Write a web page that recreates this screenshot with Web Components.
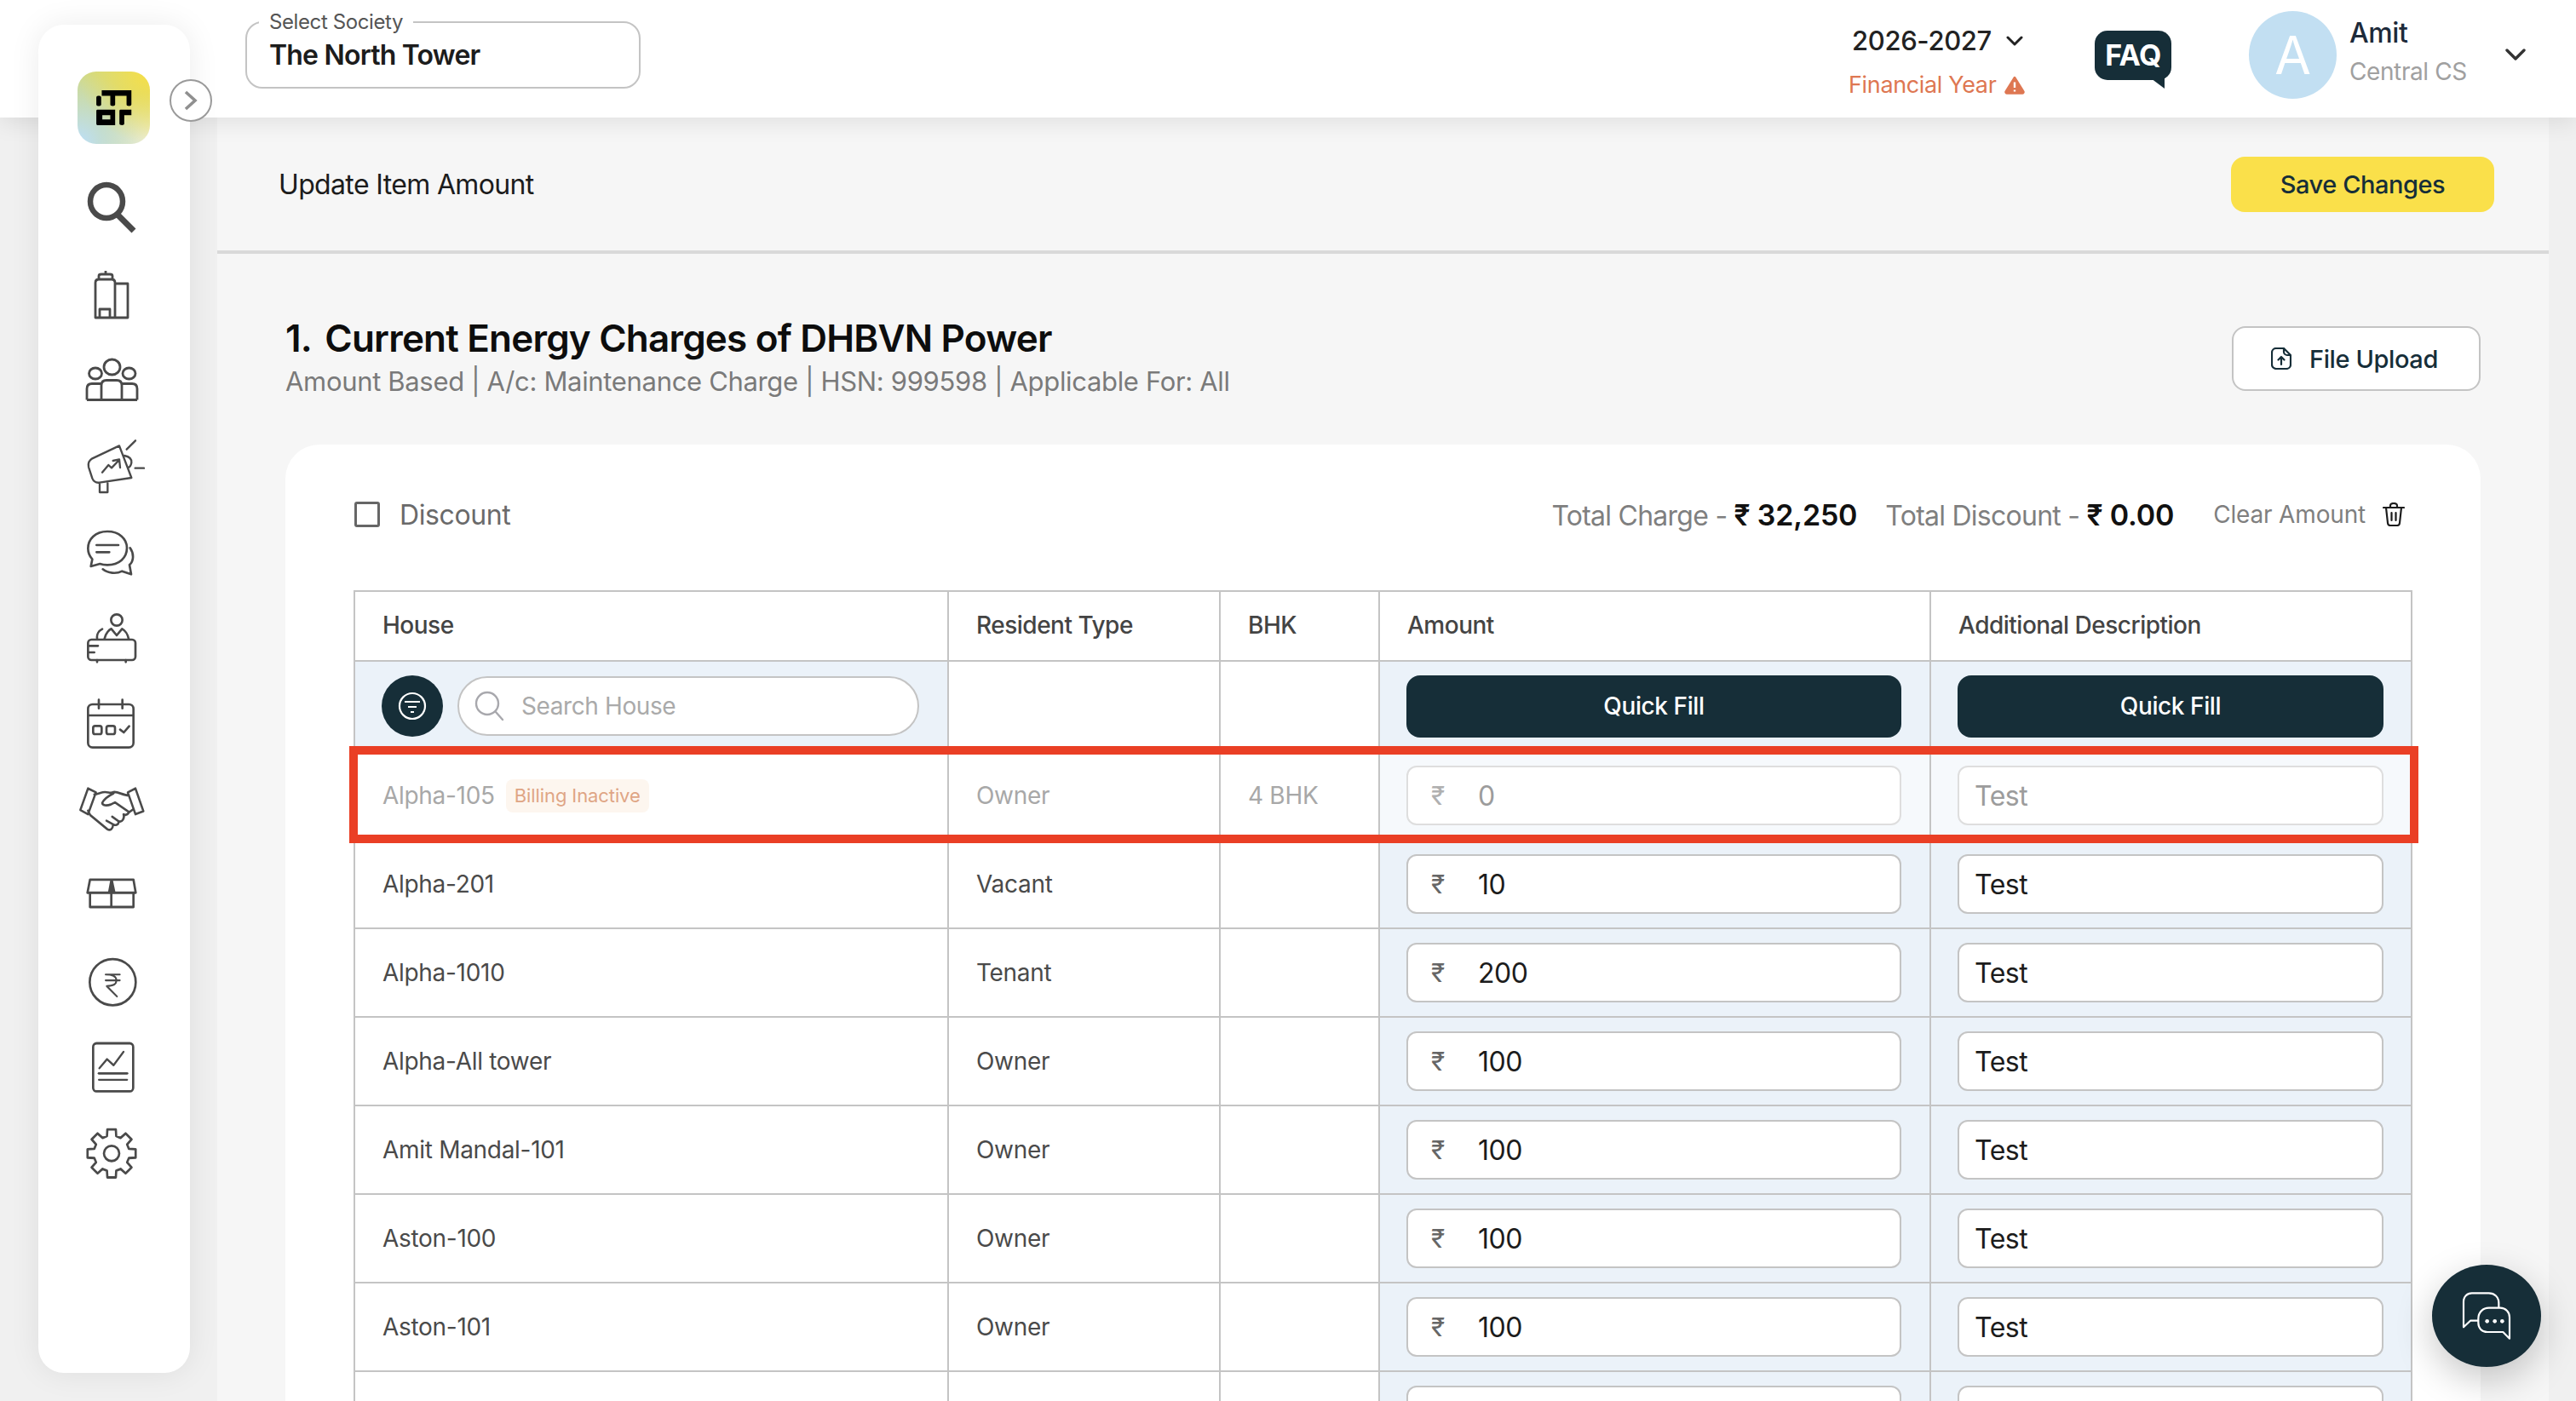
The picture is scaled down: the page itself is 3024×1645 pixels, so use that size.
<!DOCTYPE html>
<html><head><meta charset="utf-8"><title>Update Item Amount</title>
<style>
html,body{margin:0;height:1645px;overflow:hidden;background:#f0f0f0}
body{font-family:Inter,"Liberation Sans",sans-serif;letter-spacing:-.4px}
</style></head><body>
<app-shell>
  <top-bar slot="top"></top-bar>
  <side-nav slot="side"></side-nav>
  <page-main slot="main">
    <page-header title="Update Item Amount" action="Save Changes"></page-header>
    <section-head num="1." heading="Current Energy Charges of DHBVN Power" sub="Amount Based | A/c: Maintenance Charge | HSN: 999598 | Applicable For: All"></section-head>
    <charge-card>
      <charge-toolbar></charge-toolbar>
      <charge-table>
        <charge-row house="Alpha-105" type="Owner" bhk="4 BHK" amount="0" desc="Test" inactive></charge-row>
        <charge-row house="Alpha-201" type="Vacant" amount="10" desc="Test"></charge-row>
        <charge-row house="Alpha-1010" type="Tenant" amount="200" desc="Test"></charge-row>
        <charge-row house="Alpha-All tower" type="Owner" amount="100" desc="Test"></charge-row>
        <charge-row house="Amit Mandal-101" type="Owner" amount="100" desc="Test"></charge-row>
        <charge-row house="Aston-100" type="Owner" amount="100" desc="Test"></charge-row>
        <charge-row house="Aston-101" type="Owner" amount="100" desc="Test"></charge-row>
        <charge-row></charge-row>
      </charge-table>
    </charge-card>
  </page-main>
  <chat-fab slot="fab"></chat-fab>
</app-shell>
<script>
function def(name,render){
  customElements.define(name,class extends HTMLElement{
    connectedCallback(){
      if(this.shadowRoot)return;
      const r=this.attachShadow({mode:'open'});
      r.innerHTML=render(this);
    }
  });
}
const INK='#162e38';
def('app-shell',()=>`<style>
:host{display:grid;grid-template-columns:45px 178px 32px 1fr 32px;grid-template-rows:138px 1507px;height:1645px;overflow:hidden;position:relative}
::slotted([slot=top]){grid-column:1/-1;grid-row:1;z-index:1}
::slotted([slot=side]){grid-column:2;grid-row:1/3;z-index:2}
::slotted([slot=main]){grid-column:4;grid-row:2;z-index:0}
</style><slot name="top"></slot><slot name="side"></slot><slot name="main"></slot><slot name="fab"></slot>`);

def('top-bar',()=>`<style>
:host{display:flex;align-items:flex-start;background:#fff;box-shadow:0 6px 26px rgba(0,0,0,.09);padding-left:288px;height:138px;box-sizing:border-box;white-space:nowrap}
svg{flex:none}
.soc{position:relative;box-sizing:border-box;width:464px;height:79px;margin-top:25px;border:2px solid #c4c4c4;border-radius:20px;padding:18px 26px 0;font-size:32px;font-weight:600;color:#1c1c1c;line-height:40px;letter-spacing:-.8px}
.soc span{position:absolute;left:14px;top:-14px;background:#fff;padding:0 12px;font-size:24px;line-height:26px;font-weight:400;color:#555;letter-spacing:-.4px}
.r{margin-left:auto;display:flex;align-items:flex-start;padding-right:59px}
.yr{width:203px;margin-right:86px;padding-top:28px}
.yr b{display:flex;align-items:center;font-weight:500;font-size:31px;line-height:40px;color:#222;padding-left:4px;gap:17px;letter-spacing:-.35px}
.yr i{display:flex;align-items:center;gap:9px;font-style:normal;font-size:27px;line-height:36px;color:#de7752;margin-top:14px;letter-spacing:-.35px}
.faq{position:relative;box-sizing:border-box;width:90px;height:58px;margin:36px 91px 0 0;background:${INK};border-radius:15px;color:#fff;font-weight:700;font-size:34px;line-height:58px;text-align:center;letter-spacing:-.5px}
.faq svg{position:absolute;right:8px;top:56px}
.av{width:103px;height:103px;margin:13px 15px 0 0;border-radius:50%;background:#c2dff2;color:#fff;font-size:62px;line-height:103px;text-align:center;font-weight:400}
.who{width:183px;padding-top:19px}
.who div{font-size:32px;line-height:40px;color:#1d2a3a;font-weight:500}
.who span{display:block;font-size:28px;line-height:36px;color:#a0a0a0;margin-top:7px}
.ch{margin-top:56px}
</style>
<div class="soc"><span>Select Society</span>The North Tower</div>
<div class="r">
 <div class="yr"><b>2026-2027 <svg width="20" height="12" viewBox="0 0 20 12" fill="none" stroke="#222" stroke-width="3" stroke-linecap="round" stroke-linejoin="round"><path d="M2 2l8 8 8-8"/></svg></b>
 <i>Financial Year <svg width="24" height="22" viewBox="0 0 24 22"><path d="M12 2L22 18a1.5 1.5 0 0 1-1.5 2.5h-17A1.5 1.5 0 0 1 2 18z" fill="#de7752" stroke="#de7752" stroke-width="2.5" stroke-linejoin="round"/><path d="M12 7.5v6.5M12 16.5v2" stroke="#fff" stroke-width="2.4"/></svg></i></div>
 <div class="faq">FAQ<svg width="16" height="12" viewBox="0 0 16 12"><path d="M0 0h16v12z" fill="${INK}"/></svg></div>
 <div class="av">A</div>
 <div class="who"><div>Amit</div><span>Central CS</span></div>
 <svg class="ch" width="24" height="16" viewBox="0 0 24 16" fill="none" stroke="#333" stroke-width="3.4" stroke-linecap="round" stroke-linejoin="round"><path d="M2 3l10 10L22 3"/></svg>
</div>`);

function gearPath(cx,cy){
  const R=86,r=63,pts=[];
  for(let i=0;i<8;i++){
    const a=i*Math.PI/4;
    const p=(rad,d)=>{const t=a+d*Math.PI/180;return (cx+rad*Math.cos(t)).toFixed(1)+' '+(cy+(rad*Math.sin(t))*.933).toFixed(1)};
    pts.push(p(r,-15),p(R,-10),p(R,10),p(r,15));
  }
  return 'M'+pts.join('L')+'Z';
}
function cell(body,oy,h){
  h=h||300;
  return `<svg width="178" height="100" viewBox="15 ${oy} 534 ${h}" preserveAspectRatio="none" fill="none" stroke="#4a4a4a" stroke-width="8" stroke-linecap="round" stroke-linejoin="round">${body}</svg>`;
}
function pageCell(y,body){
  return `<svg width="178" height="100" viewBox="45 ${y} 178 100" fill="none" stroke="#4a4a4a" stroke-width="2.8" stroke-linejoin="round">${body}</svg>`;
}
def('side-nav',()=>{
 const icons=[
  pageCell(193,`<ellipse cx="125" cy="236.5" rx="19" ry="19.5" stroke-width="6.5"/><path d="M139 253l18 18" stroke-width="7"/>`),
  pageCell(293,`<path d="M112 373V332q0-4 4-4h15q4 0 4 4v41zM135 333h15v40h-15M117 373v-10h12v10M116 328v-4q0-2 3-2h10q3 0 3 2v4M124 322v-4"/>`),
  pageCell(393,`<ellipse cx="131.500" cy="431" rx="9.500" ry="9"/><ellipse cx="112" cy="438.500" rx="7.500" ry="6.500"/><ellipse cx="151.500" cy="438.500" rx="7.500" ry="6.500"/><path d="M102 469.500v-13q0-6 6-6h11M161 469.500v-13q0-6-6-6h-12M102 469.500h59M119 469.500v-17q0-6 6-6h12q6 0 6 6v17"/>`),
  cell(`<path d="M300 130L205 175Q188 185 192 205L205 245Q212 262 230 260L343 243ZM231 262V294H259V262M318 165Q345 170 343 190Q340 205 332 207M326 143L357 112M356 209H387M240 224L262 198L273 208L300 180M278 183L300 178L303 207" stroke-width="7"/>`,39),
  cell(`<path d="M258 432C215 432 190 460 190 492C190 510 198 522 205 530L200 555L232 546C240 549 250 550 258 550C300 550 327 525 327 490C327 458 300 432 258 432ZM220 480H297M220 505H265M338 490C352 510 352 535 336 550L342 583L310 572C290 582 260 580 242 565"/>`,339),
  cell(`<circle cx="291" cy="744" r="20"/><path d="M248 810C252 790 265 778 272 775L291 798L310 775C320 780 330 795 333 810M222 808C220 795 228 782 240 776M190 835H225M190 858H212M222 885V892M323 885V892"/><rect x="190" y="813" width="167" height="72" rx="12"/>`,639),
  cell(`<rect x="190" y="1041" width="160" height="152" rx="16"/><path d="M190 1080H350M228 1025V1055M311 1025V1055M303 1130L316 1140L335 1118"/><rect x="208" y="1117" width="30" height="29" rx="7"/><rect x="255" y="1117" width="30" height="29" rx="7"/>`,939),
  cell(`<path d="M190 72L218 85L190 157L163 143ZM330 85L357 72L385 147L357 157ZM212 92C225 90 240 84 250 84C262 84 270 90 280 84C295 82 315 95 332 95M280 88C265 95 245 108 240 120C240 128 255 130 270 125L285 118L335 150C328 160 320 160 315 157C320 170 310 185 298 180L275 165M298 182C298 192 285 195 278 190L255 178M278 192C278 205 268 212 258 206L198 160Q195 155 190 145M335 150L350 140" stroke-width="7.500"/>`,-19.6,280),
  cell(`<path d="M197 372H350L358 415H188ZM197 415V462H350V415M272 415V462"/><path d="M268 375H278L287 415H260Z" fill="#4a4a4a" stroke="none"/>`,260.4,280),
  cell(`<ellipse cx="277" cy="709" rx="81" ry="76"/><path d="M252 684H302M252 703H302M252 684C285 684 290 695 290 703C290 718 275 722 256 722L292 756" stroke-width="6"/>`,540.4,280),
  cell(`<rect x="208" y="910" width="141" height="158" rx="12"/><path d="M230 992L257 962L280 982L315 938" stroke-width="7"/><path d="M228 1009H328" /><path d="M228 1030H328" stroke-width="6"/>`,820.4,280),
  cell(`<path d="${gearPath(273,1272)}"/><ellipse cx="273" cy="1272" rx="27" ry="25"/>`,1100.4,280)
 ];
 return `<style>
:host{display:block;position:relative;margin-top:29px;height:1583px;width:178px;background:#fff;border-radius:30px;box-shadow:0 0 36px rgba(0,0,0,.08);box-sizing:border-box;padding-top:55px}
.logo{display:block;width:85px;height:85px;margin:0 0 24px 46px;border-radius:22px;background:radial-gradient(circle at 100% 0,#f7df45 0,rgba(247,223,69,0) 70%),radial-gradient(circle at 0 100%,#bcdffa 0,rgba(188,223,250,0) 70%),radial-gradient(circle at 100% 100%,#f2f0d8 0,rgba(242,240,216,0) 50%),#cfd98a}
.toggle{position:absolute;left:154px;top:64px;width:46px;height:46px;border:2.5px solid #9a9a9a;border-radius:50%;background:#fff;display:flex;align-items:center;justify-content:center;box-sizing:content-box}
nav{display:flex;flex-direction:column}
nav svg{display:block}
</style>
<div class="logo"><svg width="85" height="85" viewBox="18 12 254 254"><g fill="#000"><rect x="84" y="97" width="17" height="36" rx="6"/><path d="M103 78h104v50q0 5-8 5q-9 0-9-5V97h-40v31q0 5-8 5q-9 0-9-5V97h-30z"/><path fill-rule="evenodd" d="M88 146h62v54H88q-4 0-4-4v-46q0-4 4-4zM105 165v15h28v-15z"/><path d="M165 150q0-4 4-4h38v19h-25v31q0 4-8 4q-9 0-9-4z"/></g></svg></div>
<div class="toggle"><svg width="16" height="24" viewBox="0 0 16 24" fill="none" stroke="#8f8f8f" stroke-width="3.600"><path d="M2 2l11 10L2 22"/></svg></div>
<nav>${icons.join('')}</nav>`;
});

def('page-main',()=>`<style>:host{display:block;background:#f6f6f6;height:1507px;overflow:hidden}</style><slot></slot>`);

def('page-header',h=>`<style>
:host{display:flex;align-items:center;justify-content:space-between;box-sizing:border-box;height:160px;padding:0 64px 0 72px;border-bottom:4px solid #d9d9d9}
.t{font-size:32px;color:#1c1c1c;letter-spacing:-.65px}
.b{box-sizing:border-box;width:309px;height:65px;line-height:65px;text-align:center;background:#fae04a;border-radius:16px;color:${INK};font-weight:500;font-size:29px;letter-spacing:-.45px}
</style><div class="t">${h.getAttribute('title')}</div><div class="b">${h.getAttribute('action')}</div>`);

def('section-head',h=>`<style>
:host{display:flex;justify-content:space-between;align-items:flex-start;padding:71px 80px 0}
h1{margin:0;font-size:44px;line-height:56px;font-weight:600;color:#0d0d0d;letter-spacing:-.8px}
h1 span{margin-right:5px}
p{margin:3px 0 0;font-size:31px;line-height:40px;color:#7a7a7a;letter-spacing:-.33px}
.u{display:flex;align-items:center;gap:21px;box-sizing:border-box;width:292px;height:76px;margin-top:14px;padding-left:44px;background:#fff;border:2px solid #c4c4c4;border-radius:16px;font-size:29px;font-weight:500;color:${INK}}
</style><div><h1><span>${h.getAttribute('num')}</span> ${h.getAttribute('heading')}</h1><p>${h.getAttribute('sub')}</p></div>
<div class="u"><svg width="24" height="26" viewBox="0 0 24 26" fill="none" stroke="${INK}" stroke-width="2.200" stroke-linejoin="round" stroke-linecap="round"><path d="M6 1h9l8 8v11a5 5 0 0 1-5 5H6a5 5 0 0 1-5-5V6a5 5 0 0 1 5-5zM15 1v4a4 4 0 0 0 4 4h4M12 20v-9M8.500 14.500L12 11l3.500 3.500"/></svg>File Upload</div>`);

def('charge-card',()=>`<style>:host{display:block;margin:54px 80px 0;padding:52px 82px 0 80px;background:#fff;border-radius:40px;height:1200px}</style><slot></slot>`);

def('charge-toolbar',()=>`<style>
:host{display:flex;align-items:center;height:60px;margin-bottom:59px;padding-right:7px}
.cb{box-sizing:border-box;width:30px;height:30px;border:3px solid #666;border-radius:3px;margin:0 23px 0 1px}
.d{font-size:32px;color:#6a6a6a;margin-right:auto}
.t{font-size:32px;color:#7f7f7f;margin-right:33px;letter-spacing:-.75px}
.t b{font-size:34px;font-weight:600;color:#111;letter-spacing:-.2px}
.c{font-size:28px;color:#7f7f7f;margin:0 20px 0 13px;letter-spacing:-.17px}
</style><div class="cb"></div><div class="d">Discount</div>
<div class="t">Total Charge - <b>₹ 32,250</b></div><div class="t">Total Discount - <b>₹ 0.00</b></div>
<div class="c">Clear Amount</div>
<svg width="26" height="28" viewBox="0 0 26 28" fill="none" stroke="#1c1c1c" stroke-width="2.200" stroke-linecap="round" stroke-linejoin="round"><path d="M1 6h24M4 6l2 18q.3 3 3 3h8q2.700 0 3-3l2-18M9 6V4q0-3 4-3t4 3v2M10.500 12v9M15.500 12v9"/></svg>`);

const COLS='grid-template-columns:697px 319px 187px 647px 565px';
def('charge-table',()=>`<style>
:host{display:block;position:relative;border:solid #c4c4c4;border-width:2px 0 0 2px;width:2417px;box-sizing:border-box;font-size:28px;color:#4a4a4a}
.row{display:grid;${COLS}}
.c{box-sizing:border-box;border:solid #c4c4c4;border-width:0 2px 2px 0;display:flex;align-items:center}
.h .c{height:82px;padding-left:32px;color:#444;font-weight:500;letter-spacing:-.5px;padding-bottom:2px}
.f .c{height:106px;padding:0 33px 0 31px}
.f .c:last-child{padding-right:32px}
.blue{background:#ebf2f9}
.fb{flex:none;width:72px;height:72px;border-radius:50%;background:${INK};display:flex;align-items:center;justify-content:center;margin:0 17px 0 0}
.s{flex:none;box-sizing:border-box;width:542px;height:70px;border:2px solid #c4c4c4;border-radius:35px;background:#fff;display:flex;align-items:center;padding-left:16px;gap:19px;color:#aaa;font-size:28px}
.q{flex:1;height:73px;line-height:73px;border-radius:16px;background:${INK};color:#fff;text-align:center;font-weight:500;font-size:28px}
.box{position:absolute;left:-7px;top:181px;width:2429px;height:114px;box-sizing:border-box;border:10px solid #ea3f25;pointer-events:none;z-index:2}
</style>
<div class="row h"><div class="c">House</div><div class="c">Resident Type</div><div class="c">BHK</div><div class="c">Amount</div><div class="c">Additional Description</div></div>
<div class="row f"><div class="c blue"><div class="fb"><svg width="34" height="34" viewBox="0 0 34 34" fill="none" stroke="#fff" stroke-width="2.200"><circle cx="17" cy="17" r="15"/><path d="M8 12h18M12 18h10M15 24h4"/></svg></div>
<div class="s"><svg width="38" height="38" viewBox="0 0 38 38" fill="none" stroke="#a8a8ad" stroke-width="2.400" stroke-linecap="round"><circle cx="17" cy="16" r="13"/><path d="M27 26l8 9"/></svg>Search House</div></div>
<div class="c"></div><div class="c"></div><div class="c blue"><div class="q">Quick Fill</div></div><div class="c blue"><div class="q">Quick Fill</div></div></div>
<slot></slot><div class="box"></div>`);

def('charge-row',h=>{
 const off=h.hasAttribute('inactive');
 const g=a=>h.getAttribute(a)||'';
 return `<style>
:host{display:grid;${COLS};height:104px;color:${off?'#a8a8a8':'#4a4a4a'};letter-spacing:-.3px}
.c{box-sizing:border-box;border:solid #c4c4c4;border-width:0 2px 2px 0;display:flex;align-items:center;padding-left:32px;height:104px}
.blue{background:${off?'#f6f9fc':'#ebf2f9'};padding:0 33px 0 31px}
.blue:last-child{padding-right:32px}
.tag{margin-left:13px;height:39px;line-height:39px;padding:0 10px;background:#fdf6ef;color:#dfa585;border-radius:8px;font-size:22px;letter-spacing:-.1px}
.i{box-sizing:border-box;flex:1;height:70px;background:#fff;border:2px solid ${off?'#dedede':'#c4c4c4'};border-radius:12px;display:flex;align-items:center;font-size:32px;color:${off?'#9c9c9c':'#1c1c1c'};padding-left:27px;letter-spacing:-.5px}
.i span{font-size:30px;color:${off?'#b0b0b0':'#666'};width:55px;flex:none}
.d.i{padding-left:18px}
</style>
<div class="c">${g('house')}${off?'<div class="tag">Billing Inactive</div>':''}</div>
<div class="c">${g('type')}</div><div class="c">${g('bhk')}</div>
<div class="c blue"><div class="i">${g('amount')?'<span>₹</span>'+g('amount'):''}</div></div>
<div class="c blue"><div class="i d">${g('desc')}</div></div>`;
});

def('chat-fab',()=>`<style>
:host{position:absolute;left:2855px;top:1485px;width:128px;height:120px;border-radius:50%;background:${INK};box-shadow:0 14px 44px rgba(0,0,0,.22);z-index:5;display:block}
svg{display:block}
</style><svg width="128" height="120" viewBox="1065 555 384 360" fill="none" stroke="#fff" stroke-width="6.500" stroke-linejoin="round"><path d="M1300 705V690C1300 668 1285 655 1265 655H1205C1188 655 1176 668 1176 685V775L1200 752H1228"/><path d="M1265 707H1305C1325 707 1338 722 1338 740V815L1315 792H1260C1240 792 1228 778 1228 760V745C1228 722 1245 707 1265 707Z"/><g fill="#fff" stroke="none"><circle cx="1259" cy="754" r="7"/><circle cx="1286" cy="754" r="7"/><circle cx="1312" cy="754" r="7"/></g></svg>`);
</script>
</body></html>
